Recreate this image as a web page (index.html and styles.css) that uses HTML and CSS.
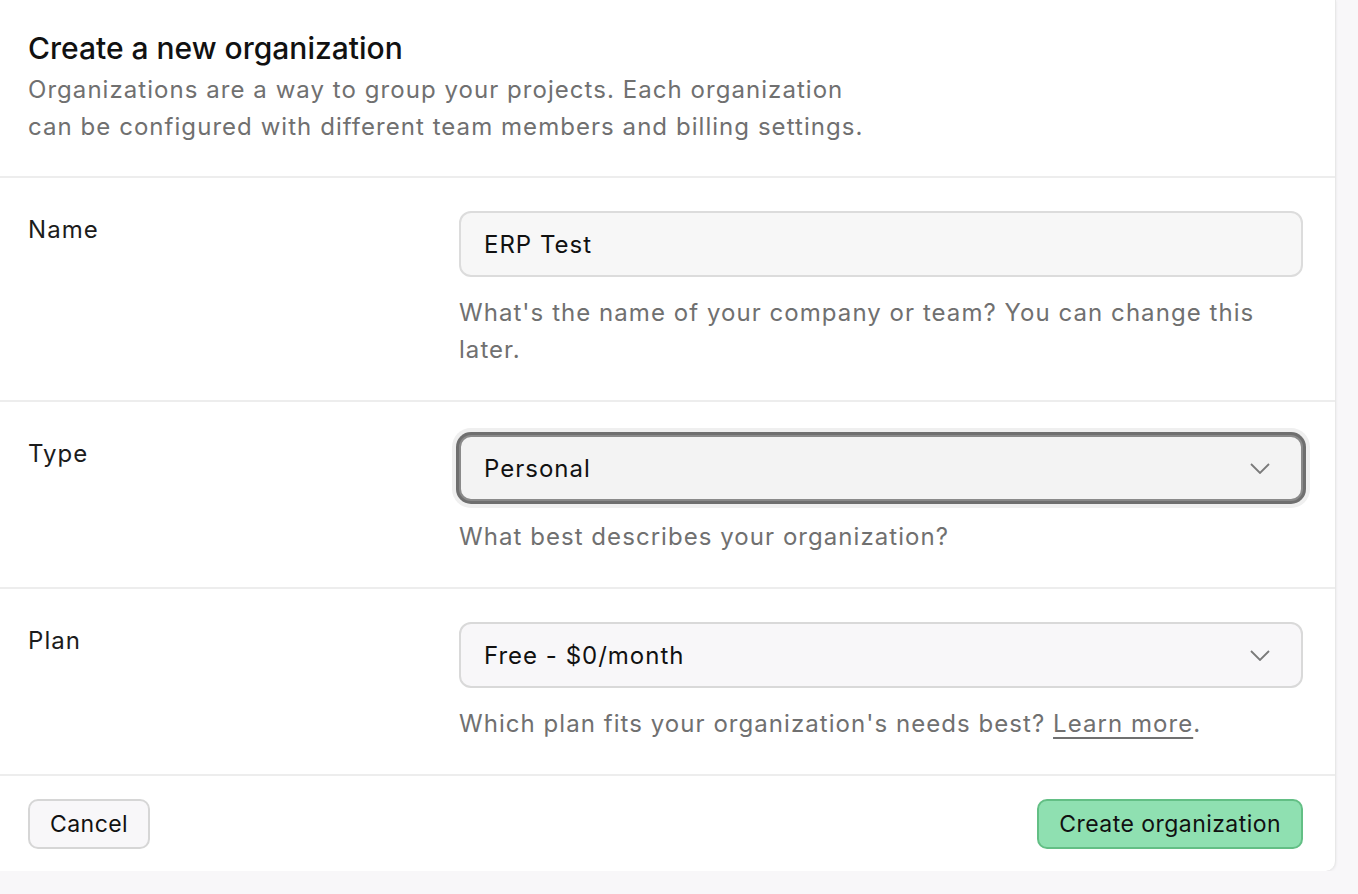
FILE: index.html
```html
<!DOCTYPE html>
<html lang="en">
<head>
    <meta charset="UTF-8">
    <meta name="viewport" content="width=device-width, initial-scale=1.0">
    <title>Create a new organization</title>
    <link rel="stylesheet" href="styles.css">
</head>
<body>
    <form class="org-card" onsubmit="return false">
        <div class="org-header">
            <h1>Create a new organization</h1>
            <p>Organizations are a way to group your projects. Each organization<br>can be configured with different team members and billing settings.</p>
        </div>

        <div class="field-row">
            <label class="field-label" for="orgName">Name</label>
            <div class="field-body">
                <input class="field-input" id="orgName" type="text" value="ERP Test">
                <p class="field-help">What's the name of your company or team? You can change this later.</p>
            </div>
        </div>

        <div class="field-row">
            <label class="field-label" for="orgType">Type</label>
            <div class="field-body">
                <div class="field-select is-focused" id="orgType">
                    <span>Personal</span>
                    <svg class="chevron" width="20" height="11" viewBox="0 0 20 11"><path d="M1 1l9 9 9-9" fill="none" stroke="currentColor" stroke-width="1.8"/></svg>
                </div>
                <p class="field-help">What best describes your organization?</p>
            </div>
        </div>

        <div class="field-row">
            <label class="field-label" for="orgPlan">Plan</label>
            <div class="field-body">
                <div class="field-select plan" id="orgPlan">
                    <span>Free - $0/month</span>
                    <svg class="chevron" width="20" height="11" viewBox="0 0 20 11"><path d="M1 1l9 9 9-9" fill="none" stroke="currentColor" stroke-width="1.8"/></svg>
                </div>
                <p class="field-help">Which plan fits your organization's needs best? <a href="#">Learn more</a>.</p>
            </div>
        </div>

        <div class="org-footer">
            <button type="button" class="btn btn-default">Cancel</button>
            <button type="submit" class="btn btn-primary">Create organization</button>
        </div>
    </form>
</body>
</html>
```

FILE: styles.css
```css
body {
    margin: 0;
    background: #f8f7f9;
    font-family: Inter, "Noto Sans", sans-serif;
    color: #1c1c1c;
}
.org-card {
    width: 1335px;
    background: #fff;
    border-right: 1px solid #e8e8e8;
    border-bottom-right-radius: 10px;
    box-shadow: 0 1px 3px rgba(0,0,0,0.08);
}
.org-header {
    padding: 30px 28px 31px;
}
.org-header h1 {
    margin: 0;
    font-size: 30px;
    line-height: 36px;
    font-weight: 500;
    color: #111;
}
.org-header p {
    margin: 5px 0 0;
    font-size: 24px;
    line-height: 37px;
    letter-spacing: 1.05px;
    color: #707070;
}
.field-row {
    display: flex;
    border-top: 2px solid #ededed;
    padding: 33px 32px 32px 28px;
}
.field-label {
    width: 431px;
    font-size: 24px;
    line-height: 37px;
    letter-spacing: 1.05px;
    color: #1c1c1c;
}
.field-body {
    flex: 1;
}
.field-input,
.field-select {
    box-sizing: border-box;
    width: 100%;
    height: 66px;
    border: 2px solid #dcdcdc;
    border-radius: 12px;
    background: #f7f7f7;
    padding: 0 31px 0 23px;
    font-family: inherit;
    font-size: 24px;
    letter-spacing: 1px;
    color: #111;
    outline: none;
}
.field-select {
    display: flex;
    align-items: center;
    justify-content: space-between;
}
.field-select.is-focused {
    background: #f3f3f3;
    border-color: #8a8a8a;
    box-shadow: 0 0 0 3px #6f6f6f, 0 0 0 7px #efefef;
}
.field-select.plan {
    background: #f8f7f9;
    border-color: #d9d9d9;
}
.chevron {
    color: #7a7a7a;
}
.field-help {
    margin: 17px 0 0;
    font-size: 24px;
    line-height: 37px;
    letter-spacing: 1.05px;
    color: #707070;
}
.field-help a {
    color: #707070;
    text-decoration: underline;
    text-underline-offset: 5px;
    text-decoration-thickness: 2px;
}
.org-footer {
    display: flex;
    justify-content: space-between;
    border-top: 2px solid #ededed;
    padding: 23px 32px 22px 28px;
}
.btn {
    height: 50px;
    padding: 0 20px;
    border-radius: 10px;
    font-family: inherit;
    font-size: 23px;
    letter-spacing: 0.45px;
    color: #111;
    cursor: pointer;
}
.btn-default {
    background: #f8f7f9;
    border: 2px solid #d6d6d6;
}
.btn-primary {
    background: #8fe0b1;
    border: 2px solid #63bf85;
}
```
